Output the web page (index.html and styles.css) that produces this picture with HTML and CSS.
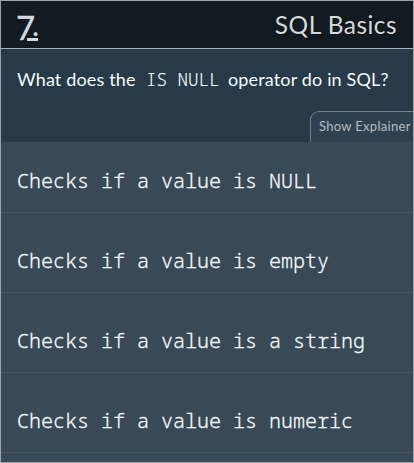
FILE: index.html
```html
<!DOCTYPE html>
<html lang="en">
<head>
<meta charset="utf-8">
<title>SQL Basics</title>
<link rel="stylesheet" href="styles.css">
</head>
<body>
<main class="quiz">
  <header class="top"><span class="number">7<span class="dot">.</span></span><h1 class="topic">SQL Basics</h1></header>
  <section class="question">
    <p class="prompt"><span class="lead">What does the</span><code>IS NULL</code><span class="rest">operator do in SQL?</span></p>
    <button class="explain"><span>Show Explainer</span></button>
  </section>
  <ul class="answers">
    <li>Checks if a value is NULL</li>
    <li>Checks if a value is empty</li>
    <li>Checks if a value is a string</li>
    <li>Checks if a value is numeric</li>
  </ul>
</main>
</body>
</html>
```
FILE: styles.css
```css
* { box-sizing: border-box; margin: 0; padding: 0; }
body { font-family: Lato, sans-serif; color: #f4fafc; }
.quiz { width: 414px; height: 463px; border: 1px solid #98a4a9; background: #394956; overflow: hidden; }
.top { height: 48px; padding: 0 16px 0 15px; display: flex; justify-content: space-between; background: #131b22; border-bottom: 1px solid #a5b2b9; color: #d5dadd; }
.number { position: relative; width: 23px; font-size: 33px; line-height: 53px; letter-spacing: -2px; white-space: nowrap; -webkit-text-stroke: 0.3px #d5dadd; }
.number::after { content: ""; position: absolute; left: 11px; top: 37px; width: 11px; height: 3px; background: #d5dadd; box-shadow: 0 -1px 0 #131b22; }
.dot { position: relative; top: -4px; left: -1px; z-index: 1; font-size: 28px; }
.topic { font-size: 24.5px; font-weight: 400; line-height: 48px; letter-spacing: 0.45px; white-space: nowrap; text-shadow: 1px 1px 1px #0008; }
.question { height: 93px; display: flex; flex-direction: column; justify-content: space-between; background: #283a48; }
.prompt { display: flex; padding: 0 16px; font-size: 18px; line-height: 61px; letter-spacing: 0.15px; white-space: nowrap; }
.prompt .lead { width: 129px; }
.prompt code { width: 82px; font: 300 17.5px/61px "Noto Sans Mono", "DejaVu Sans Mono", monospace; letter-spacing: 0; -webkit-text-stroke: 0.15px; }
.explain { align-self: flex-end; width: 103px; height: 31px; border: solid #71818c; border-width: 1px 0 0 1px; border-top-left-radius: 9px; background: #2f4051; color: #b3bdc5; font: 13px/28px Lato, sans-serif; letter-spacing: 0.3px; text-align: left; padding: 0 0 2px 8px; white-space: nowrap; }
.answers { list-style: none; }
.answers li { height: 80px; padding: 18px 16px 0; font: 300 20px/60px "Noto Sans Mono", "DejaVu Sans Mono", monospace; white-space: pre; border-bottom: 1px solid #465661; -webkit-text-stroke: 0.3px; }
.answers li:first-child { height: 71px; padding-top: 9px; }
```
